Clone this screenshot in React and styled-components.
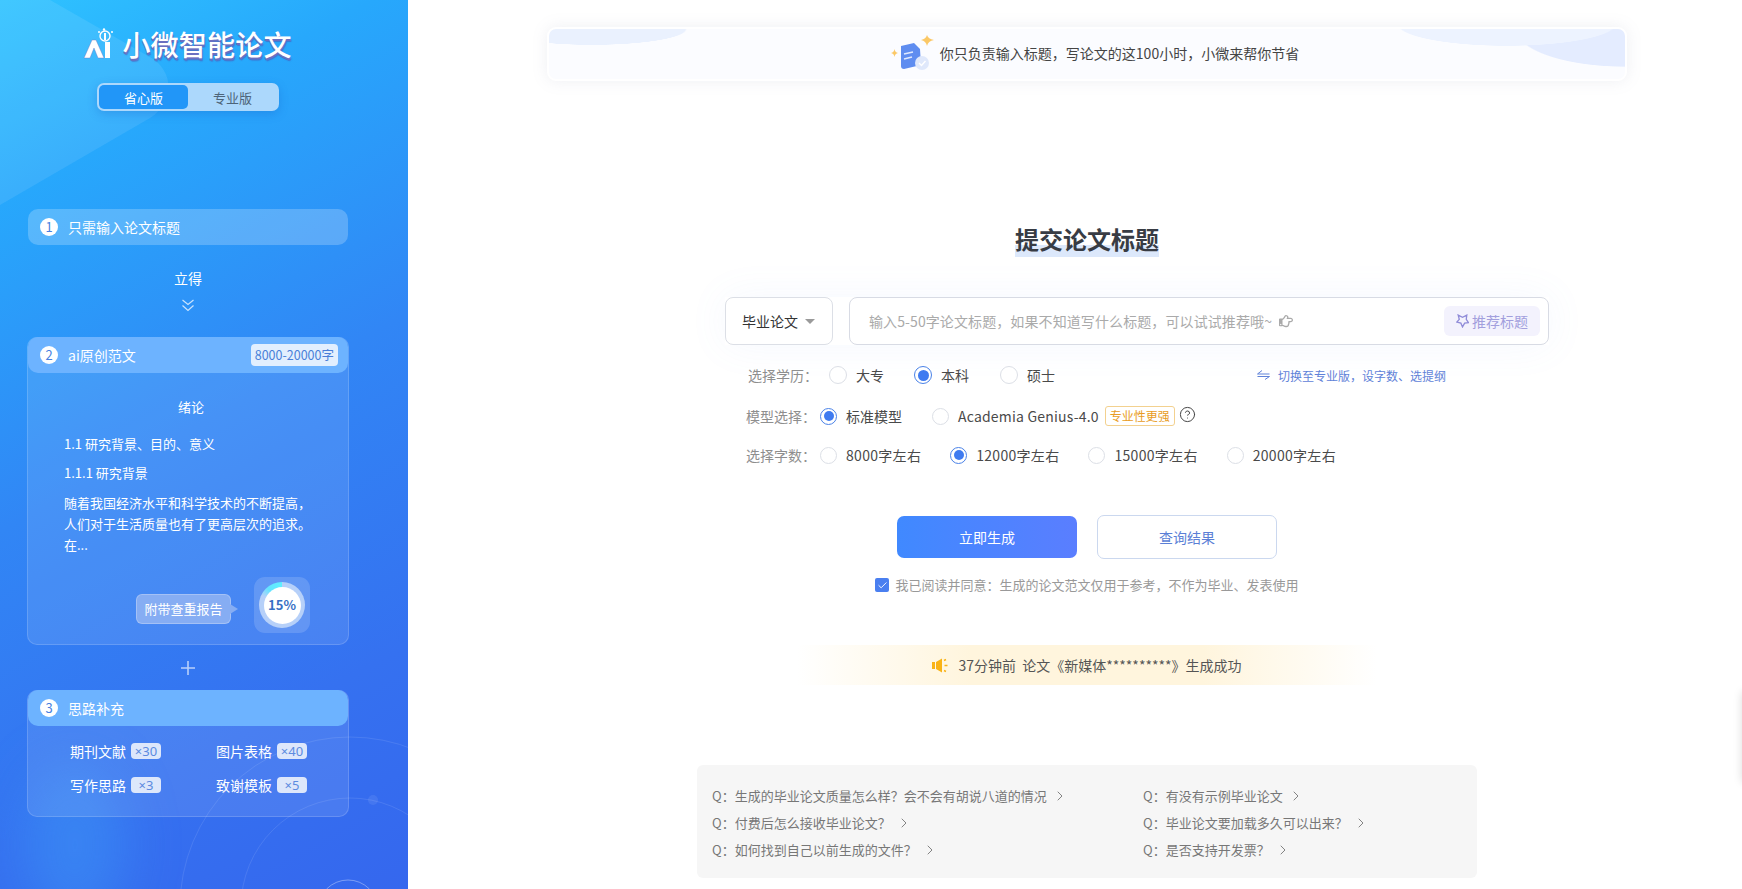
import React from 'react';
import styled, { createGlobalStyle } from 'styled-components';
import { Check, ChevronRight, HelpCircle } from 'lucide-react';
import { FaRegHandPointRight } from 'react-icons/fa';

const FONT = `"Noto Sans CJK SC", "Noto Sans", sans-serif`;

const GlobalStyle = createGlobalStyle`
    html, body {
        margin: 0;
        padding: 0;
        height: 100%;
        background: #fff;
        overflow: hidden;
    }
    body {
        font-family: ${FONT};
        color: #333;
    }
`;

const Page = styled.div`
    position: relative;
    display: flex;
    width: 1742px;
    height: 889px;
    overflow: hidden;
`;

const EdgeTab = styled.div`
    position: absolute;
    right: -20px;
    top: 692px;
    width: 20px;
    height: 90px;
    box-shadow: 0 0 10px rgba(0, 0, 0, 0.14);
`;

/* sidebar */
const Sidebar = styled.aside`
    position: relative;
    flex: 0 0 408px;
    height: 889px;
    box-sizing: border-box;
    padding: 26px 60px 0 28px;
    display: flex;
    flex-direction: column;
    background: linear-gradient(152deg, #2fc3ff 0%, #27a8fc 18%, #3186f5 48%, #3571f0 78%, #3567ee 100%);
    overflow: hidden;
`;

const SideArt = styled.svg`
    position: absolute;
    left: 0;
    top: 0;
    width: 408px;
    height: 889px;
`;

const Logo = styled.div`
    position: relative;
    display: flex;
    align-items: center;
    justify-content: center;
    gap: 9px;
    height: 36px;
    margin-left: -1px;
`;

const LogoText = styled.h1`
    margin: 0;
    font-size: 28px;
    line-height: 36px;
    font-weight: 500;
    letter-spacing: 0.2px;
    color: #fff;
    text-shadow: 0 2px 0 #6a6fc0, 1px 3px 1px rgba(80, 70, 170, 0.5);
`;

const Toggle = styled.div`
    position: relative;
    align-self: center;
    display: flex;
    width: 182px;
    height: 28px;
    box-sizing: border-box;
    padding: 2px;
    margin-top: 21px;
    border-radius: 7px;
    background: #acd8fc;
    box-shadow: 0 3px 10px rgba(20, 80, 190, 0.25);
`;

const ToggleItem = styled.div`
    flex: 1;
    display: flex;
    align-items: center;
    justify-content: center;
    font-size: 13px;
    border-radius: 5px;
    color: ${(props) => (props.$active ? '#fff' : '#4d6479')};
    background: ${(props) => (props.$active ? '#2196f8' : 'transparent')};
`;

const StepBar = styled.div`
    position: relative;
    display: flex;
    align-items: center;
    height: 36px;
    box-sizing: border-box;
    padding: 0 12px;
    border-radius: 10px;
    font-size: 14px;
    color: #fff;
    background: ${(props) => (props.$light ? '#6db3ff' : 'rgba(255, 255, 255, 0.22)')};
`;

const StepNum = styled.span`
    flex: 0 0 18px;
    height: 18px;
    margin-right: 10px;
    border-radius: 50%;
    background: #fff;
    color: #4a7fe0;
    font-size: 13px;
    line-height: 18px;
    text-align: center;
`;

const WordBadge = styled.span`
    margin-left: auto;
    margin-right: -2px;
    padding: 0 4px;
    height: 22px;
    line-height: 22px;
    border-radius: 4px;
    font-size: 12.5px;
    background: #e2effe;
    color: #4a7fd8;
`;

const FirstStep = styled.div`
    position: relative;
    margin-top: 98px;
`;

const Yield = styled.div`
    position: relative;
    margin-top: 23px;
    text-align: center;
    font-size: 14px;
    line-height: 20px;
    color: #fff;
`;

const ChevronWrap = styled.div`
    position: relative;
    height: 16px;
    margin: 9px 0 24px;
    display: flex;
    justify-content: center;
`;

const Card = styled.section`
    position: relative;
    border-radius: 10px;
    background: rgba(255, 255, 255, ${(props) => props.$alpha});
    border: 1px solid rgba(255, 255, 255, 0.16);
    margin: 0 -1px;
`;

const CardHead = styled(StepBar)`
    margin: -1px 0 0;
`;

const ArticleBody = styled.div`
    padding: 24px 30px 0 36px;
    height: 271px;
    box-sizing: border-box;
    position: relative;
    font-size: 13px;
    color: #fff;
`;

const ArticleTitle = styled.div`
    text-align: center;
    line-height: 20px;
    margin-bottom: 17px;
`;

const ArticleLine = styled.div`
    line-height: 20px;
    margin-bottom: 9px;
`;

const ArticleParagraph = styled.div`
    line-height: 21px;
    width: 250px;
`;

const ReportRow = styled.div`
    position: absolute;
    right: 38px;
    bottom: 11px;
    display: flex;
    align-items: center;
    gap: 23px;
`;

const Bubble = styled.div`
    position: relative;
    width: 95px;
    height: 30px;
    box-sizing: border-box;
    line-height: 27px;
    text-align: center;
    font-size: 13px;
    color: #fff;
    background: #86adf3;
    border: 1px solid rgba(255, 255, 255, 0.25);
    border-radius: 6px;
    margin-top: 8px;

    &::after {
        content: '';
        position: absolute;
        right: -8px;
        top: 9px;
        border-left: 8px solid #86adf3;
        border-top: 5px solid transparent;
        border-bottom: 5px solid transparent;
    }
`;

const GaugeTile = styled.div`
    width: 56px;
    height: 56px;
    display: flex;
    align-items: center;
    justify-content: center;
    border-radius: 11px;
    background: rgba(255, 255, 255, 0.15);
`;

const Gauge = styled.div`
    width: 46px;
    height: 46px;
    border-radius: 50%;
    display: flex;
    align-items: center;
    justify-content: center;
    background: conic-gradient(from 0deg, #b6d0f9 0deg, #b6d0f9 295deg, #63e4ff 320deg, #5ff0ff 360deg);
`;

const GaugeInner = styled.div`
    width: 37px;
    height: 37px;
    border-radius: 50%;
    background: #fff;
    color: #376fc4;
    font-size: 13px;
    font-weight: 700;
    line-height: 36px;
    text-align: center;
`;

const PlusRow = styled.div`
    position: relative;
    height: 45px;
    display: flex;
    align-items: center;
    justify-content: center;
    color: rgba(255, 255, 255, 0.65);
`;

const ExtraGrid = styled.div`
    display: grid;
    grid-template-columns: 146px 146px;
    grid-auto-rows: 34px;
    padding: 8px 0 14px 42px;
`;

const ExtraItem = styled.div`
    display: flex;
    align-items: center;
    gap: 5px;
    font-size: 14px;
    color: #fff;
`;

const ExtraTag = styled.span`
    width: 30px;
    height: 16px;
    border-radius: 4px;
    background: #dde7fb;
    color: #5c8be0;
    font-family: "Noto Sans", sans-serif;
    font-size: 13px;
    line-height: 16px;
    text-align: center;
`;

/* main column */
const Main = styled.main`
    flex: 1;
    box-sizing: border-box;
    padding: 27px 0 0 24px;
    display: flex;
    flex-direction: column;
    align-items: center;
`;

const Banner = styled.div`
    position: relative;
    width: 1080px;
    height: 54px;
    box-sizing: border-box;
    display: flex;
    align-items: center;
    justify-content: center;
    gap: 5px;
    padding: 0 0 3px 16px;
    border: 2px solid #fff;
    border-radius: 9px;
    font-size: 14px;
    color: #444;
    background:
        radial-gradient(ellipse 95px 16px at 4% 0%, #eaf1fe 98%, transparent 100%),
        radial-gradient(ellipse 110px 22px at 89% -10%, #edf3ff 98%, transparent 100%),
        radial-gradient(ellipse 110px 38px at 100% 0%, #e4ecff 98%, transparent 100%),
        #fbfcff;
    box-shadow: 0 0 16px rgba(120, 130, 160, 0.13);
`;

const PageTitle = styled.h2`
    margin: 141px 0 0;
    font-size: 24px;
    line-height: 34px;
    height: 35px;
    font-weight: 700;
    color: #383c44;
    background: linear-gradient(to bottom, transparent 23px, #dce8fb 23px);
`;

const InputRow = styled.div`
    display: flex;
    gap: 16px;
    margin: 40px 0 0 100px;
    box-shadow: 0 0 40px rgba(120, 150, 240, 0.07);
`;

const SelectBox = styled.div`
    width: 108px;
    height: 48px;
    box-sizing: border-box;
    display: flex;
    align-items: center;
    gap: 7px;
    padding-left: 16px;
    border: 1px solid #dcdfe6;
    border-radius: 8px;
    font-size: 14px;
    background: #fff;
`;

const Caret = styled.span`
    margin-top: 1px;
    border-top: 5px solid #9a9a9a;
    border-left: 5px solid transparent;
    border-right: 5px solid transparent;
`;

const TitleInput = styled.div`
    width: 700px;
    height: 48px;
    box-sizing: border-box;
    display: flex;
    align-items: center;
    gap: 7px;
    padding: 0 8px 0 19px;
    border: 1px solid #d8dbe4;
    border-radius: 8px;
    font-size: 14px;
    color: #aaa;
    background: #fff;
`;

const Placeholder = styled.span`
    letter-spacing: 0.1px;
`;

const Recommend = styled.div`
    margin-left: auto;
    width: 96px;
    height: 30px;
    display: flex;
    align-items: center;
    justify-content: center;
    gap: 3px;
    border-radius: 6px;
    font-size: 14px;
    background: #f3f2fd;
    color: #a29fdd;
`;

const FormRows = styled.div`
    width: 824px;
    margin: 19px 0 0 100px;
    display: flex;
    flex-direction: column;
    gap: 19px;
`;

const FormRow = styled.div`
    display: flex;
    align-items: center;
    height: 22px;
    padding-left: ${(props) => props.$pad}px;
    margin-top: ${(props) => props.$shift || 0}px;
    font-size: 14px;
`;

const FormLabel = styled.span`
    width: ${(props) => props.$w}px;
    flex: none;
    color: #8e8e8e;
    font-size: 14px;
    white-space: nowrap;
`;

const RadioLabel = styled.label`
    display: flex;
    align-items: center;
    gap: ${(props) => props.$gap || 9}px;
    margin-right: ${(props) => props.$mr}px;
    letter-spacing: ${(props) => props.$spacing || 0}px;
    color: #4a4a4a;
`;

const RadioDot = styled.span`
    box-sizing: border-box;
    width: ${(props) => props.$size}px;
    height: ${(props) => props.$size}px;
    border-radius: 50%;
    border: 1px solid ${(props) => (props.$on ? '#4a82e8' : '#dcdfe6')};
    display: flex;
    align-items: center;
    justify-content: center;
    background: #fff;

    &::after {
        content: '';
        display: ${(props) => (props.$on ? 'block' : 'none')};
        width: ${(props) => props.$size - 7}px;
        height: ${(props) => props.$size - 7}px;
        border-radius: 50%;
        background: #3f7bf0;
    }
`;

const ProTag = styled.span`
    box-sizing: border-box;
    height: 20px;
    width: 70px;
    margin-left: -24px;
    border: 1px solid #f3d18f;
    border-radius: 3px;
    font-size: 12px;
    line-height: 18px;
    text-align: center;
    color: #e89c24;
`;

const HelpIcon = styled(HelpCircle)`
    margin: -4px 0 0 4px;
    color: #444;
`;

const SwitchLink = styled.a`
    margin-left: auto;
    margin-right: 103px;
    display: flex;
    align-items: center;
    gap: 8px;
    font-size: 12px;
    color: #5f82d8;
`;

const ButtonRow = styled.div`
    display: flex;
    align-items: center;
    gap: 20px;
    margin-top: 49px;
`;

const PrimaryButton = styled.button`
    width: 180px;
    height: 42px;
    border: none;
    border-radius: 7px;
    font: 14px ${FONT};
    color: #fff;
    background: linear-gradient(90deg, #4089ff, #5a7eff);
`;

const GhostButton = styled.button`
    width: 180px;
    height: 44px;
    border: 1px solid #cbd8ef;
    border-radius: 7px;
    font: 14px ${FONT};
    color: #5b7fd6;
    background: #fff;
`;

const Agree = styled.div`
    display: flex;
    align-items: center;
    gap: 6px;
    margin-top: 16px;
    font-size: 13px;
    line-height: 20px;
    color: #999;
`;

const CheckBox = styled.span`
    width: 14px;
    height: 14px;
    border-radius: 2px;
    display: flex;
    align-items: center;
    justify-content: center;
    background: #4a7ff0;
    color: #fff;
`;

const Notice = styled.div`
    width: 580px;
    height: 40px;
    margin-top: 50px;
    display: flex;
    align-items: center;
    justify-content: center;
    gap: 10px;
    font-size: 14px;
    color: #555;
    background: linear-gradient(90deg, #fff 0%, #fff5dd 30%, #fff5dd 70%, #fff 100%);
`;

const Faq = styled.div`
    width: 780px;
    height: 113px;
    box-sizing: border-box;
    margin-top: 80px;
    padding: 17px 15px;
    display: grid;
    grid-template-columns: 431px 1fr;
    grid-auto-rows: 27px;
    align-items: center;
    border-radius: 6px;
    background: #f6f6f6;
    font-size: 13px;
    color: #777;
`;

const FaqItem = styled.div`
    display: flex;
    align-items: center;
    white-space: nowrap;
`;

const FaqArrow = styled(ChevronRight)`
    margin-left: 5px;
    color: #666;
`;

const SideDecor = () => (
    <SideArt viewBox="0 0 408 889" fill="none">
        <path d="M50 0 L155 60 Q175 78 165 100 Q160 112 150 118 L0 205 L0 0 Z" fill="#fff" fillOpacity="0.09" />
        <ellipse cx="75" cy="845" rx="50" ry="80" fill="#3fa0f8" fillOpacity="0.4" style={{ filter: 'blur(26px)' }} />
        <circle cx="350" cy="907" r="170" stroke="#fff" strokeOpacity="0.1" />
        <circle cx="350" cy="907" r="109" stroke="#fff" strokeOpacity="0.1" />
        <circle cx="373" cy="800" r="5" fill="#fff" fillOpacity="0.08" />
        <circle cx="348" cy="910" r="30" stroke="#fff" strokeOpacity="0.35" />
    </SideArt>
);

const AiLogo = () => (
    <svg width="30" height="32" viewBox="0 0 30 32">
        <path d="M1 30 L9 12 L13 12 L21 30 L15 30 L11 20 L7 30 Z" fill="#fff" stroke="#6a6fc0" strokeWidth="0.4" />
        <rect x="22" y="14" width="5" height="16" fill="#fff" />
        <circle cx="22" cy="8" r="5" fill="none" stroke="#fff" strokeWidth="1.4" />
        <rect x="21" y="5" width="2" height="7" fill="#fff" />
        <circle cx="21" cy="1.5" r="1.2" fill="#fff" />
        <circle cx="29" cy="4" r="1" fill="#fff" />
        <circle cx="16" cy="4" r="1" fill="#fff" />
    </svg>
);

const DoubleChevron = () => (
    <svg width="16" height="16" viewBox="0 0 16 16" fill="none" stroke="rgba(255,255,255,0.75)" strokeWidth="1.2">
        <path d="M2.5 3 L8 7.5 L13.5 3" />
        <path d="M2.5 8.5 L8 13.5 L13.5 8.5" />
    </svg>
);

const PaperIcon = () => (
    <svg width="44" height="38" viewBox="0 0 44 38">
        <path d="M36 1 Q37 5 43 6 Q37 7 36 12 Q35 7 30 6 Q35 5 36 1 Z" fill="#fbc866" />
        <path d="M3.500 15 Q4 18.500 7 19 Q4 19.500 3.500 23 Q3 19.500 0 19 Q3 18.500 3.500 15 Z" fill="#fbc866" />
        <path d="M10 12 L23 9 L29 15 L30 31 L13 35 Q10 35 10 32 Z" fill="#5f8df0" />
        <path d="M13 20 L22 18 M13 25 L21 23" stroke="#dfe9ff" strokeWidth="1.5" />
        <circle cx="31" cy="29" r="7" fill="#dfe8fb" />
        <path d="M28 29 L30.500 31.500 L34.500 27" stroke="#fff" strokeWidth="1.4" fill="none" />
    </svg>
);

const StarIcon = () => (
    <svg width="13" height="14" viewBox="0 0 12 13" fill="none" stroke="#8f8bd8" strokeWidth="1.2">
        <path d="M2 1 L6 3 L10 1 L9.500 5 L11.500 8 L8 8.500 L6 12 L4.500 8.500 L0.700 7.500 L3 5 Z" />
    </svg>
);

const SwapIcon = () => (
    <svg width="13" height="10" viewBox="0 0 13 10" fill="none" stroke="#5f82d8" strokeWidth="1">
        <path d="M0.500 4 L5 0.500 M0.500 4 L12.500 4 M12.500 6.500 L0.500 6.500 M12.500 6.500 L8 9.500" />
    </svg>
);

const Speaker = () => (
    <svg width="16" height="15" viewBox="0 0 16 15">
        <path d="M0 4 L3 4 L3 11 L0 11 Z M4 4 L10 0.500 L10 14.500 L4 11 Z" fill="#f9b317" />
        <path d="M12 2.500 L14 1.500 M12.500 7.500 L15.500 7.500 M12 12.500 L14 13.500" stroke="#f9b317" strokeWidth="1.4" />
    </svg>
);

const DEGREES = [
    { label: '大专', mr: 30 },
    { label: '本科', mr: 31, on: true },
    { label: '硕士', mr: 0 },
];

const WORDS = [
    { label: '8000字左右', mr: 29 },
    { label: '12000字左右', mr: 29, on: true },
    { label: '15000字左右', mr: 29 },
    { label: '20000字左右', mr: 0 },
];

const QUESTIONS = [
    '生成的毕业论文质量怎么样？会不会有胡说八道的情况',
    '有没有示例毕业论文',
    '付费后怎么接收毕业论文？',
    '毕业论文要加载多久可以出来？',
    '如何找到自己以前生成的文件？',
    '是否支持开发票？',
];

const App = () => {
    return (
        <Page>
            <GlobalStyle />
            <Sidebar>
                <SideDecor />
                <Logo>
                    <AiLogo />
                    <LogoText>小微智能论文</LogoText>
                </Logo>
                <Toggle>
                    <ToggleItem $active>省心版</ToggleItem>
                    <ToggleItem>专业版</ToggleItem>
                </Toggle>
                <FirstStep>
                    <StepBar>
                        <StepNum>1</StepNum>只需输入论文标题
                    </StepBar>
                </FirstStep>
                <Yield>立得</Yield>
                <ChevronWrap>
                    <DoubleChevron />
                </ChevronWrap>
                <Card $alpha={0.1}>
                    <CardHead $light>
                        <StepNum>2</StepNum>ai原创范文
                        <WordBadge>8000-20000字</WordBadge>
                    </CardHead>
                    <ArticleBody>
                        <ArticleTitle>绪论</ArticleTitle>
                        <ArticleLine>1.1 研究背景、目的、意义</ArticleLine>
                        <ArticleLine>1.1.1 研究背景</ArticleLine>
                        <ArticleParagraph>
                            随着我国经济水平和科学技术的不断提高，人们对于生活质量也有了更高层次的追求。在...
                        </ArticleParagraph>
                        <ReportRow>
                            <Bubble>附带查重报告</Bubble>
                            <GaugeTile>
                                <Gauge>
                                    <GaugeInner>15%</GaugeInner>
                                </Gauge>
                            </GaugeTile>
                        </ReportRow>
                    </ArticleBody>
                </Card>
                <PlusRow>
                    <svg width="16" height="16" viewBox="0 0 16 16" stroke="currentColor" strokeWidth="1.6">
                        <path d="M8 1 V15 M1 8 H15" />
                    </svg>
                </PlusRow>
                <Card $alpha={0.1}>
                    <CardHead $light>
                        <StepNum>3</StepNum>思路补充
                    </CardHead>
                    <ExtraGrid>
                        <ExtraItem>期刊文献<ExtraTag>×30</ExtraTag></ExtraItem>
                        <ExtraItem>图片表格<ExtraTag>×40</ExtraTag></ExtraItem>
                        <ExtraItem>写作思路<ExtraTag>×3</ExtraTag></ExtraItem>
                        <ExtraItem>致谢模板<ExtraTag>×5</ExtraTag></ExtraItem>
                    </ExtraGrid>
                </Card>
            </Sidebar>
            <Main>
                <Banner>
                    <PaperIcon />
                    你只负责输入标题，写论文的这100小时，小微来帮你节省
                </Banner>
                <PageTitle>提交论文标题</PageTitle>
                <InputRow>
                    <SelectBox>
                        毕业论文
                        <Caret />
                    </SelectBox>
                    <TitleInput>
                        <Placeholder>输入5-50字论文标题，如果不知道写什么标题，可以试试推荐哦~</Placeholder>
                        <FaRegHandPointRight size={14} />
                        <Recommend>
                            <StarIcon />
                            推荐标题
                        </Recommend>
                    </TitleInput>
                </InputRow>
                <FormRows>
                    <FormRow $pad={23}>
                        <FormLabel $w={81}>选择学历：</FormLabel>
                        {DEGREES.map((d) => (
                            <RadioLabel key={d.label} $mr={d.mr} $gap={9}>
                                <RadioDot $size={18} $on={d.on} />
                                {d.label}
                            </RadioLabel>
                        ))}
                        <SwitchLink>
                            <SwapIcon />
                            切换至专业版，设字数、选提纲
                        </SwitchLink>
                    </FormRow>
                    <FormRow $pad={21}>
                        <FormLabel $w={74}>模型选择：</FormLabel>
                        <RadioLabel $mr={30}>
                            <RadioDot $size={17} $on />
                            标准模型
                        </RadioLabel>
                        <RadioLabel $mr={30} $spacing={0.2}>
                            <RadioDot $size={17} />
                            Academia Genius-4.0
                        </RadioLabel>
                        <ProTag>专业性更强</ProTag>
                        <HelpIcon size={17} strokeWidth={1.4} />
                    </FormRow>
                    <FormRow $pad={21} $shift={-2}>
                        <FormLabel $w={74}>选择字数：</FormLabel>
                        {WORDS.map((w) => (
                            <RadioLabel key={w.label} $mr={w.mr} $spacing={0.3}>
                                <RadioDot $size={17} $on={w.on} />
                                {w.label}
                            </RadioLabel>
                        ))}
                    </FormRow>
                </FormRows>
                <ButtonRow>
                    <PrimaryButton>立即生成</PrimaryButton>
                    <GhostButton>查询结果</GhostButton>
                </ButtonRow>
                <Agree>
                    <CheckBox>
                        <Check size={11} strokeWidth={2} />
                    </CheckBox>
                    我已阅读并同意：生成的论文范文仅用于参考，不作为毕业、发表使用
                </Agree>
                <Notice>
                    <Speaker />
                    37分钟前&nbsp;&nbsp;论文《新媒体**********》生成成功
                </Notice>
                <Faq>
                    {QUESTIONS.map((q) => (
                        <FaqItem key={q}>
                            <span>Q：</span>
                            <span>{q}</span>
                            <FaqArrow size={16} strokeWidth={1.2} />
                        </FaqItem>
                    ))}
                </Faq>
            </Main>
            <EdgeTab />
        </Page>
    );
};

export default App;
